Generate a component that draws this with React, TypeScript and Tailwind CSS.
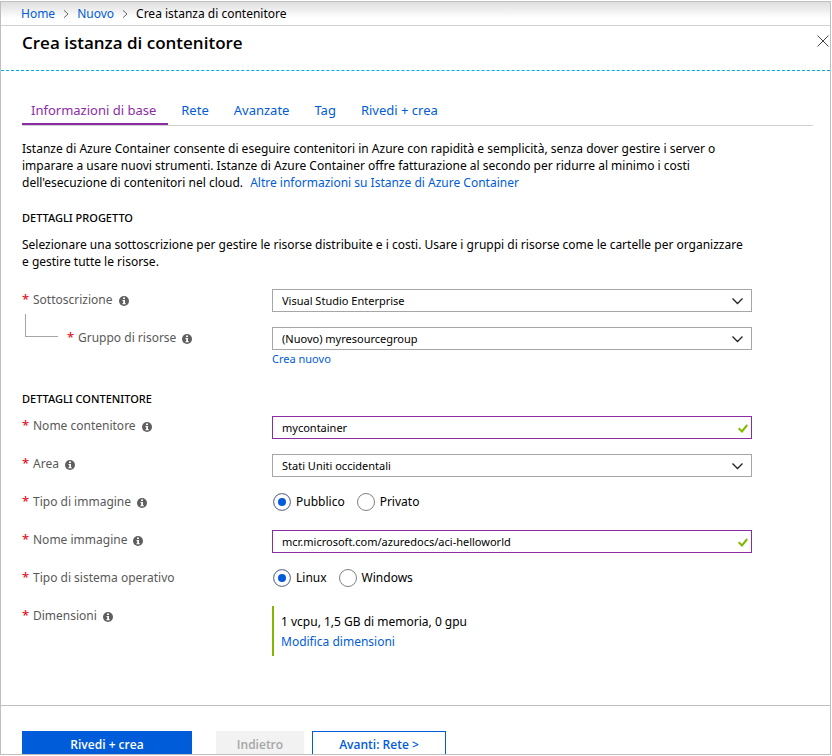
import type { ReactNode } from "react";

function InfoIcon() {
  return (
    <svg viewBox="0 0 10 10" className="size-[10px] shrink-0" aria-hidden="true">
      <circle cx="5" cy="5" r="5" fill="#5f5f5f" />
      <path d="M4 1.5h2v1.5H4zM3.5 4H6v3.2h.8v1.1H3.4V7.2h.8V5h-.7z" fill="#fff" />
    </svg>
  );
}

function Crumb() {
  return (
    <svg viewBox="0 0 6 8" className="h-2 w-[6px] fill-none stroke-[#666]" aria-hidden="true">
      <path d="M1 0.3 5 4 1 7.7" />
    </svg>
  );
}

function Star() {
  return <span className="w-[11px] shrink-0 text-[13px] font-medium text-[#e81123]">*</span>;
}

function Row({ label, id, info = true, indent = false, group = false, compact = false, children }: {
  label: string;
  id: string;
  info?: boolean;
  indent?: boolean;
  group?: boolean;
  compact?: boolean;
  children: ReactNode;
}) {
  const caption = (
    <>
      <Star />
      {label}
    </>
  );
  return (
    <div className="flex min-h-[38px] items-start" role={group ? "radiogroup" : undefined} aria-labelledby={group ? id : undefined}>
      <div className={`flex w-[250px] shrink-0 items-center text-[#595959] ${compact ? "h-[19px]" : "h-[21px]"}`}>
        {indent && <span className="mr-[9px] ml-[3px] h-[23px] w-[33px] -translate-y-3 border-b border-l border-[#a6a6a6]" />}
        {group ? (
          <span id={id} className="flex">{caption}</span>
        ) : (
          <label htmlFor={id} className="flex">{caption}</label>
        )}
        {info && <span className="mt-[2px] ml-[6px]"><InfoIcon /></span>}
      </div>
      <div className="min-w-0 flex-1">{children}</div>
    </div>
  );
}

function Select({ id, value }: { id: string; value: string }) {
  return (
    <div className="relative">
      <select id={id} className="block h-[23px] w-full appearance-none border border-[#a6a6a6] bg-white pr-8 pl-[9px] text-[11px] leading-[21px] text-black">
        <option>{value}</option>
      </select>
      <svg viewBox="0 0 11 7" className="pointer-events-none absolute top-[9px] right-[9px] h-[7px] w-[11px] fill-none stroke-[#222] stroke-[1.3]" aria-hidden="true">
        <path d="M.5 .5 5.5 5.5l5-5" />
      </svg>
    </div>
  );
}

function TextBox({ id, value }: { id: string; value: string }) {
  return (
    <div className="relative">
      <input id={id} type="text" defaultValue={value} className="block h-[23px] w-full border border-[#8a2da5] bg-white pr-6 pl-[9px] text-[11px] text-black" />
      <svg viewBox="0 0 10 9" className="pointer-events-none absolute top-2 right-1 h-[9px] w-[10px] fill-none stroke-[#7fba00] stroke-2" aria-hidden="true">
        <path d="M.7 4.2 4 7.4 9.2 1" />
      </svg>
    </div>
  );
}

function Radios({ name, options }: { name: string; options: string[] }) {
  return (
    <div className="flex h-[19px] items-center gap-3 pl-px">
      {options.map((o, i) => (
        <label key={o} className="flex items-center gap-[5px] text-black">
          <input
            type="radio"
            name={name}
            defaultChecked={i === 0}
            className="size-[18px] appearance-none rounded-full border border-[#808080] bg-white checked:bg-[#015cda] checked:shadow-[inset_0_0_0_4px_white]"
          />
          {o}
        </label>
      ))}
    </div>
  );
}

const tabs = ["Rete", "Avanzate", "Tag", "Rivedi + crea"];

export default function App() {
  return (
    <div className="bg-white pt-px pr-px pb-px font-['Noto_Sans','Open_Sans',sans-serif] text-[12px] leading-[17px] text-black">
      <div className="border border-[#bfbfbf]">
        <nav className="flex h-6 items-center gap-2 border-b border-[#d2d2d2] bg-linear-to-b from-[#dedede] to-white to-70% pl-5">
          <a href="#home" className="text-[#015cda]">Home</a>
          <Crumb />
          <a href="#nuovo" className="text-[#015cda]">Nuovo</a>
          <Crumb />
          <span>Crea istanza di contenitore</span>
        </nav>

        <header className="flex h-[45px] items-start justify-between border-b border-dashed border-[#00abec] pl-[21px]">
          <h1 className="pt-[6px] font-['Open_Sans','Noto_Sans',sans-serif] text-[17px] leading-[22px] font-semibold">Crea istanza di contenitore</h1>
          <button type="button" aria-label="Chiudi" className="mt-[9px] mr-px">
            <svg viewBox="0 0 12 12" className="size-3 fill-none stroke-[#444]" aria-hidden="true">
              <path d="M.5.5l11 11M11.5.5l-11 11" />
            </svg>
          </button>
        </header>

        <main className="pr-[17px] pl-[21px]">
          <div role="tablist" className="mt-[25px] flex h-[30px] items-stretch gap-[25px] border-b border-[#d2d2d2] text-[13px]">
            <button type="button" role="tab" aria-selected="true" className="-mr-3 border-b-2 border-[#8a2da5] pt-[2px] pr-3 pl-[9px] text-[#8a2da5]">
              Informazioni di base
            </button>
            {tabs.map((t) => (
              <button key={t} type="button" role="tab" aria-selected="false" className="border-b-2 border-transparent pt-[2px] text-[#015cda]">{t}</button>
            ))}
          </div>

          <p className="mt-[14px] whitespace-nowrap">
            Istanze di Azure Container consente di eseguire contenitori in Azure con rapidità e semplicità, senza dover gestire i server o<br />
            imparare a usare nuovi strumenti. Istanze di Azure Container offre fatturazione al secondo per ridurre al minimo i costi<br />
            dell'esecuzione di contenitori nel cloud.{" "}
            <a href="#info" className="ml-1 text-[#015cda]">Altre informazioni su Istanze di Azure Container</a>
          </p>

          <form className="max-w-[730px]">
            <h2 className="mt-[18px] text-[11px] font-medium">DETTAGLI PROGETTO</h2>
            <p className="mt-[10px] whitespace-nowrap">
              Selezionare una sottoscrizione per gestire le risorse distribuite e i costi. Usare i gruppi di risorse come le cartelle per organizzare<br />
              e gestire tutte le risorse.
            </p>

            <div className="mt-[19px]">
              <Row label="Sottoscrizione" id="sub"><Select id="sub" value="Visual Studio Enterprise" /></Row>
              <Row label="Gruppo di risorse" id="rg" indent>
                <Select id="rg" value="(Nuovo) myresourcegroup" />
                <a href="#crea" className="block w-fit text-[11px] text-[#015cda]">Crea nuovo</a>
              </Row>
            </div>

            <h2 className="mt-[23px] text-[11px] font-medium">DETTAGLI CONTENITORE</h2>
            <div className="mt-[9px]">
              <Row compact label="Nome contenitore" id="name"><TextBox id="name" value="mycontainer" /></Row>
              <Row compact label="Area" id="area"><Select id="area" value="Stati Uniti occidentali" /></Row>
              <Row compact label="Tipo di immagine" id="type" group><Radios name="type" options={["Pubblico", "Privato"]} /></Row>
              <Row compact label="Nome immagine" id="image"><TextBox id="image" value="mcr.microsoft.com/azuredocs/aci-helloworld" /></Row>
              <Row compact label="Tipo di sistema operativo" id="os" group info={false}><Radios name="os" options={["Linux", "Windows"]} /></Row>
              <Row compact label="Dimensioni" id="size">
                <div className="h-[50px] border-l-2 border-[#7fba00] pt-[6px] pl-[7px] leading-5">
                  <output id="size" className="block">1 vcpu, 1,5 GB di memoria, 0 gpu</output>
                  <a href="#dim" className="text-[#015cda]">Modifica dimensioni</a>
                </div>
              </Row>
            </div>
          </form>
        </main>

        <footer className="mt-[49px] flex border-t border-[#bfbfbf] pt-[25px] pl-[21px] font-['Open_Sans','Noto_Sans',sans-serif] text-[12px] font-semibold">
          <button type="button" className="h-[23px] w-[170px] bg-[#015cda] pt-[3px] text-white">Rivedi + crea</button>
          <button type="button" disabled className="ml-6 h-[23px] w-[88px] bg-[#f2f2f2] pt-[3px] text-[#a6a6a6]">Indietro</button>
          <button type="button" className="ml-2 h-[23px] w-[134px] border border-b-0 border-[#015cda] pt-[2px] text-[#015cda]">Avanti: Rete &gt;</button>
        </footer>
      </div>
    </div>
  );
}
